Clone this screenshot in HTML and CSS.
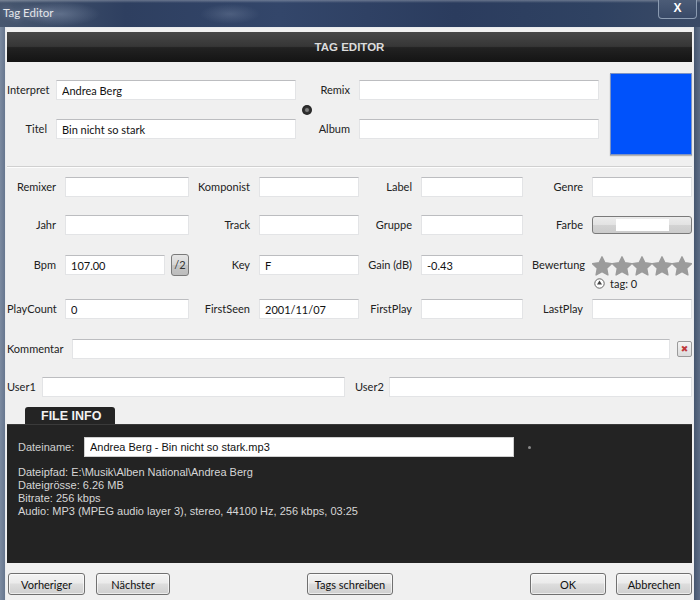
FILE: index.html
```html
<!DOCTYPE html>
<html>
<head>
<meta charset="utf-8">
<link rel="stylesheet" href="styles.css">
</head>
<body>
<div class="window">
  <div class="titlebar">
    <span class="title">Tag Editor</span>
    <span class="close">X</span>
  </div>
  <div class="client">
    <div class="header">TAG EDITOR</div>

    <div class="top">
      <div class="topgrid">
        <span class="lbl c1 r1">Interpret</span>
        <input class="inp c2 r1" value="Andrea Berg">
        <span class="lbl c3 r1">Remix</span>
        <input class="inp c4 r1" value="">
        <span class="lbl c1 r2">Titel</span>
        <input class="inp c2 r2" value="Bin nicht so stark">
        <span class="lbl c3 r2">Album</span>
        <input class="inp c4 r2" value="">
        <span class="dot"></span>
      </div>
      <div class="cover"></div>
    </div>

    <div class="sep"></div>

    <div class="fgrid row1">
      <span class="lbl">Remixer</span><input class="inp" value="">
      <span class="lbl">Komponist</span><input class="inp" value="">
      <span class="lbl">Label</span><input class="inp" value="">
      <span class="lbl">Genre</span><input class="inp" value="">
    </div>

    <div class="fgrid row2">
      <span class="lbl">Jahr</span><input class="inp" value="">
      <span class="lbl">Track</span><input class="inp" value="">
      <span class="lbl">Gruppe</span><input class="inp" value="">
      <span class="lbl">Farbe</span>
      <div class="farbe"><span class="farbe-fill"></span></div>
    </div>

    <div class="fgrid row3">
      <span class="lbl">Bpm</span>
      <div class="bpm"><input class="inp" value="107.00"><span class="half">/2</span></div>
      <span class="lbl">Key</span><input class="inp" value="F">
      <span class="lbl">Gain (dB)</span><input class="inp" value="-0.43">
      <span class="lbl">Bewertung</span>
      <div class="rating">
        <svg class="stars" width="100" height="20" viewBox="0 0 100 20">
          <defs>
            <polygon id="st" points="10,0.8 12.9,6.8 19.5,7.7 14.7,12.3 15.9,18.9 10,15.7 4.1,18.9 5.3,12.3 0.5,7.7 7.1,6.8"/>
          </defs>
          <g fill="#9b9b9b" stroke="#9b9b9b" stroke-width="1.4" stroke-linejoin="round">
            <use href="#st" x="0"/>
            <use href="#st" x="20"/>
            <use href="#st" x="40"/>
            <use href="#st" x="60"/>
            <use href="#st" x="80"/>
          </g>
        </svg>
        <div class="tag">
          <svg width="11" height="11" viewBox="0 0 11 11"><circle cx="5.5" cy="5.5" r="4.7" fill="#fff" stroke="#555" stroke-width="0.9"/><polygon points="5.5,2.6 8,6.6 3,6.6" fill="#444"/></svg>
          <span>tag: 0</span>
        </div>
      </div>
    </div>

    <div class="fgrid row4">
      <span class="lbl">PlayCount</span><input class="inp" value="0">
      <span class="lbl">FirstSeen</span><input class="inp" value="2001/11/07">
      <span class="lbl">FirstPlay</span><input class="inp" value="">
      <span class="lbl">LastPlay</span><input class="inp" value="">
    </div>

    <div class="komrow">
      <span class="lbl">Kommentar</span>
      <input class="inp" value="">
      <span class="clear">&#x2716;</span>
    </div>

    <div class="userrow">
      <div class="ucell"><span class="lbl">User1</span><input class="inp" value=""></div>
      <div class="ucell u2"><span class="lbl">User2</span><input class="inp" value=""></div>
    </div>

    <div class="fileinfo">
      <div class="tab">FILE INFO</div>
      <div class="panel">
        <div class="fnrow">
          <span class="fnlbl">Dateiname:</span>
          <input class="fninp" value="Andrea Berg - Bin nicht so stark.mp3">
          <span class="fndot"></span>
        </div>
        <div class="lines">
          <div>Dateipfad: E:\Musik\Alben National\Andrea Berg</div>
          <div>Dateigrösse: 6.26 MB</div>
          <div>Bitrate: 256 kbps</div>
          <div>Audio: MP3 (MPEG audio layer 3), stereo, 44100 Hz, 256 kbps, 03:25</div>
        </div>
      </div>
    </div>

    <div class="buttons">
      <div class="bleft">
        <button class="btn w77">Vorheriger</button>
        <button class="btn w74">Nächster</button>
      </div>
      <button class="btn w86">Tags schreiben</button>
      <div class="bright">
        <button class="btn w76">OK</button>
        <button class="btn w76">Abbrechen</button>
      </div>
    </div>
  </div>
</div>
</body>
</html>
```

FILE: styles.css
```css
html, body {
  margin: 0;
  padding: 0;
}
body {
  width: 700px;
  height: 600px;
  overflow: hidden;
  background: #53637b;
  font-family: Lato, "Liberation Sans", sans-serif;
  font-size: 11px;
  color: #222;
}
.window {
  width: 700px;
  height: 600px;
  display: flex;
  flex-direction: column;
  background: linear-gradient(90deg, #7b8aa0 0, #66768e 5px, #4a5a74 6px, #46566f 694px, #5d6d86 700px);
}
.titlebar {
  height: 27px;
  flex: none;
  display: flex;
  justify-content: space-between;
  align-items: flex-start;
  background:
    linear-gradient(180deg, rgba(255,255,255,0.28) 0, rgba(255,255,255,0) 3px),
    radial-gradient(ellipse 40px 12px at 60px 14px, rgba(140,155,180,0.45), rgba(140,155,180,0)),
    radial-gradient(ellipse 30px 10px at 230px 14px, rgba(140,155,180,0.3), rgba(140,155,180,0)),
    linear-gradient(90deg, #47576f 0%, #2e3f60 18%, #33466a 40%, #2b3c5e 65%, #2f4262 85%, #3a4a66 100%);
}
.title {
  margin: 6px 0 0 3px;
  font-family: Lato, "Liberation Sans", sans-serif;
  font-size: 11.5px;
  color: #e4e6ea;
  text-shadow: 0 0 6px rgba(160,175,200,0.8);
}
.close {
  margin-right: 3px;
  width: 39px;
  height: 19px;
  box-sizing: border-box;
  border: 1px solid rgba(170,185,205,0.7);
  border-top: none;
  border-radius: 0 0 4px 4px;
  background: linear-gradient(#4c5c77, #394a68);
  color: #fff;
  font-family: "Liberation Sans", sans-serif;
  font-weight: bold;
  font-size: 12px;
  line-height: 17px;
  text-align: center;
}
.client {
  flex: 1;
  margin: 0 6px 0 5px;
  padding: 4px 1px 0 1px;
  background: #f0f0f0;
  border: 1px solid #e9ebee;
  border-bottom: none;
}
.header {
  height: 30px;
  line-height: 30px;
  text-align: center;
  background: linear-gradient(180deg, #474747 0%, #363636 48%, #222 52%, #141414 100%);
  color: #dcdcdc;
  font-family: "Liberation Sans", sans-serif;
  font-weight: bold;
  font-size: 11.5px;
}
.top {
  display: flex;
  padding-top: 11px;
}
.topgrid {
  margin-top: 7px;
  display: grid;
  grid-template-columns: 40px 240px 45px 240px;
  grid-template-rows: 20px 20px;
  column-gap: 9px;
  row-gap: 19px;
  align-self: flex-start;
}
.c1 { grid-column: 1; }
.c2 { grid-column: 2; }
.c3 { grid-column: 3; }
.c4 { grid-column: 4; }
.r1 { grid-row: 1; }
.r2 { grid-row: 2; }
.dot {
  grid-column: 3;
  grid-row: 1 / 3;
  align-self: center;
  justify-self: start;
  margin-left: -3px;
  width: 10px;
  height: 10px;
  border-radius: 50%;
  background: radial-gradient(circle, #888 0, #777 1.5px, #333 2.5px, #222 5px);
}
.cover {
  margin-left: 11px;
  width: 82px;
  height: 82px;
  box-sizing: border-box;
  background: #0052fb;
  border: 1px solid #7d93c4;
  box-shadow: 0 1px 1px rgba(0,0,0,0.25);
}
.lbl {
  line-height: 20px;
  text-align: right;
  white-space: nowrap;
  color: #222;
}
.inp {
  box-sizing: border-box;
  height: 20px;
  width: 100%;
  margin: 0;
  padding: 0 5px;
  border: 1px solid #e3e4e6;
  border-top-color: #bcbdc0;
  background: #fff;
  font-family: Lato, "Liberation Sans", sans-serif;
  font-size: 11px;
  color: #111;
  outline: none;
}
.sep {
  margin-top: 11px;
  border-top: 1px solid #d0d0d0;
  border-bottom: 1px solid #fdfdfd;
}
.fgrid {
  display: grid;
  grid-template-columns: 49px 124px 52px 100px 44px 102px 51px 100px;
  column-gap: 9px;
  align-items: start;
}
.row1 { margin-top: 9px; }
.row2 { margin-top: 18px; }
.row3 { margin-top: 20px; }
.row4 { margin-top: 8px; }
.farbe {
  box-sizing: border-box;
  height: 18px;
  margin-top: 1px;
  border: 1px solid #7a7a7a;
  border-radius: 3px;
  background: linear-gradient(#ececec, #e2e2e2 50%, #d3d3d3 51%, #cbcbcb);
  display: flex;
  align-items: center;
  padding-left: 23px;
}
.farbe-fill {
  width: 53px;
  height: 12px;
  background: #fff;
}
.bpm {
  display: flex;
  gap: 6px;
}
.bpm .inp {
  width: 100px;
  flex: none;
}
.half {
  flex: none;
  box-sizing: border-box;
  width: 18px;
  height: 22px;
  margin-top: -1px;
  border: 1px solid #7a7a7a;
  border-radius: 3px;
  background: linear-gradient(#e6e6e6, #d6d6d6 50%, #c6c6c6 51%, #bdbdbd);
  text-align: center;
  line-height: 20px;
  font-size: 11px;
  color: #333;
}
.rating {
  display: flex;
  flex-direction: column;
}
.stars {
  display: block;
  margin-top: 1px;
}
.tag {
  height: 15px;
  display: flex;
  align-items: center;
  gap: 5px;
  padding-left: 2px;
  font-size: 11px;
  color: #222;
}
.tag svg {
  display: block;
}
.komrow {
  margin-top: 20px;
  display: flex;
  align-items: center;
  gap: 8px;
}
.komrow .inp {
  flex: 1;
}
.clear {
  margin-left: -1px;
  width: 15px;
  height: 16px;
  box-sizing: border-box;
  border: 1px solid #9a9a9a;
  border-radius: 2px;
  background: linear-gradient(#f4f4f4, #dcdcdc);
  color: #c0393b;
  font-family: "DejaVu Sans", sans-serif;
  font-size: 9px;
  line-height: 14px;
  text-align: center;
}
.userrow {
  margin-top: 18px;
  display: grid;
  grid-template-columns: 338px 337px;
  column-gap: 10px;
}
.ucell {
  display: flex;
  gap: 6px;
}
.ucell.u2 {
  gap: 5px;
}
.ucell .inp {
  flex: 1;
}
.fileinfo {
  margin-top: 10px;
}
.tab {
  margin-left: 18px;
  width: 90px;
  height: 17px;
  box-sizing: border-box;
  padding-left: 16px;
  border-radius: 3px 3px 0 0;
  background: #242424;
  color: #f2f2f2;
  font-family: "Liberation Sans", sans-serif;
  font-weight: bold;
  font-size: 12.5px;
  line-height: 19px;
}
.panel {
  height: 139px;
  box-sizing: border-box;
  padding: 12px 11px 0 11px;
  background: #232323;
  border-top: 1px solid #3a3a3a;
  font-family: "Liberation Sans", sans-serif;
  font-size: 11px;
  color: #d6d6d6;
}
.fnrow {
  display: flex;
  align-items: center;
}
.fnlbl {
  width: 66px;
  color: #d0d0d0;
}
.fninp {
  box-sizing: border-box;
  width: 430px;
  height: 20px;
  margin: 0;
  padding: 0 5px;
  border: 1px solid #cfcfcf;
  background: #fff;
  font-family: "Liberation Sans", sans-serif;
  font-size: 11px;
  color: #111;
  outline: none;
}
.fndot {
  margin-left: 14px;
  width: 3px;
  height: 3px;
  border-radius: 50%;
  background: #8a8a8a;
}
.lines {
  margin-top: 9px;
  line-height: 13px;
}
.buttons {
  margin-top: 10px;
  padding-left: 1px;
  display: grid;
  grid-template-columns: 1fr auto 1fr;
  align-items: center;
}
.bleft {
  display: flex;
  gap: 11px;
}
.bright {
  display: flex;
  gap: 10px;
  justify-content: flex-end;
}
.btn {
  height: 22px;
  margin: 0;
  padding: 0;
  box-sizing: border-box;
  border: 1px solid #707070;
  border-radius: 3px;
  background: linear-gradient(#f3f3f3, #ebebeb 45%, #dddddd 50%, #cfcfcf);
  box-shadow: inset 0 0 0 1px rgba(255,255,255,0.6);
  font-family: Lato, "Liberation Sans", sans-serif;
  font-size: 11px;
  color: #111;
}
.w77 { width: 77px; }
.w74 { width: 74px; }
.w86 { width: 86px; }
.w76 { width: 76px; }
```
